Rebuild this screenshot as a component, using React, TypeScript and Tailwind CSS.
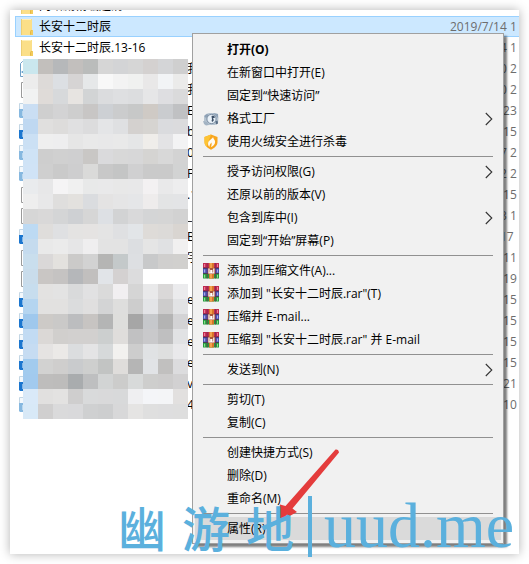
import type { ReactNode } from "react";

type FileKind = "folder" | "picture" | "document" | "video" | "videoLight";

type FileRow = {
  kind: FileKind;
  name?: string;
  tail?: string;
  date: string;
  selected?: boolean;
};

const files: FileRow[] = [
  { kind: "folder", name: "网络剧精编超清", date: "2019/7/14 1" },
  { kind: "folder", name: "长安十二时辰", date: "2019/7/14 1", selected: true },
  { kind: "folder", name: "长安十二时辰.13-16", date: "2019/7/14 1" },
  { kind: "picture", tail: "我", date: "2019/7/10 2" },
  { kind: "document", tail: "我", date: "2019/7/10 2" },
  { kind: "videoLight", tail: "E.", date: "2019/7/9 23" },
  { kind: "video", tail: "b", date: "2019/7/9 15" },
  { kind: "videoLight", tail: "0", date: "2019/6/27 2" },
  { kind: "videoLight", tail: "F", date: "2019/6/22 2" },
  { kind: "document", tail: ".1", date: "2019/6/9 15" },
  { kind: "document", tail: "_", date: "2019/6/13 1" },
  { kind: "video", tail: "B", date: "2018/10/17" },
  { kind: "document", tail: "字", date: "2019/5/8 11" },
  { kind: "document", date: "2019/5/6 19" },
  { kind: "video", tail: "e", date: "2019/5/4 15" },
  { kind: "video", tail: "e", date: "2019/5/4 15" },
  { kind: "video", tail: "e", date: "2019/5/4 15" },
  { kind: "video", tail: "e", date: "2019/5/4 15" },
  { kind: "video", tail: "vi", date: "2019/5/3 21" },
  { kind: "videoLight", tail: "4_", date: "2019/5/2 10" },
];

const mosaic: string[] = [
  "cae7ee c2bfbc b6b8ba c2bfbd babcbb d6d6d6 d3d4d6 d6d6d6 d4d1d0 d4d5d7 cfcfcf",
  "ececec dddad8 dcdfe3 d6d4d4 e6e8e9 f8f8f8 f3f3f3 f0f1f0 e9e8e8 f2f4f6 ebebea",
  "f1f2f2 dfdbd8 d7d9db e7e4e1 d2d4d5 dbdcde dedfe1 dcdddf e6e6e7 dedee1 dadadb",
  "cadef3 cfcfcf d3d3d4 cecece c8c6c5 cdd0d4 cbcccd c7c8c8 cfcac5 cacccf c0c1c3",
  "bfd8f1 e0dfde dddcdb e0e0e1 dcdcdd e4e5e7 dfe0e2 d4d1cf d6d4d1 dadbde dbdbdd",
  "cbe0f4 efefef eeeeef e6e6e6 e9e9e9 e8e8e9 e9e9e9 e5e6e7 efedea e3e3e5 f3f3f4",
  "cfe3f6 cecece d0d0d0 cfcfd0 c9c7c5 dadadc d8d8d8 d7d7d8 d5d4d2 d8d8d8 d3d3d3",
  "d0e3f6 cfcfcf cacaca cececf dadad9 c8c8c8 c4c5c5 d0d0d1 cacaca cacaca d2d3d3",
  "e9ebed e7e7e8 f5f4f5 f0f0f0 e8e9e9 e9e9ea e8e8e8 e8e8e9 f3f1f2 e9e9ea ededee",
  "eeeeee e8e8e9 dfdedd e3e1de dadcdf e4e3e3 e5e5e6 e5e6e8 eeecec e3e4e5 e3e4e6",
  "d6d6d6 d9d8d8 d4d5d6 ced0d3 d6d6d6 dde0e4 d2d3d4 d9d9da d4d5d6 d5d5d5 d2d2d2",
  "bddaf3 dfdddb dfe0e2 e4e3e2 e5e3e2 e4e4e4 dfe0e2 e2e5e8 dedbd8 dcdad8 d9d5d1",
  "c5dbee e9e9e9 ebebeb e6e6e7 efeeef e3e3e3 e3e3e3 dcdee1 e5e5e5 e0e1e3 f1f0f0",
  "c9deed dad8d8 e3e1de cbcac9 d2d2d2 b5b5b4 c4c9ca dddfe2 c8c9ca d0cfce d1d0ce",
  "c9dceb c9c6c4 c5c3c2 b5b7ba c1bfbe e1e4e8 d4d1d1 dcdcdd ffffff ffffff ffffff",
  "c7ddee e3e2e1 e3e3e3 d9dadb e1e1e2 dadada f1eff1 d5d5d5 e9e9ea dad8d8 ebebed",
  "b5d5f0 e2e1e0 e2e1e0 dbdcdd e0dfdf d3d4d5 dededd cdcdcd e3e4e7 cdcccc e2e3e5",
  "9fc8ed cdcac7 cac9c8 bcbdbf c7c4c2 b4b5b5 dededc a6a6a6 c6c8cb b4b4b4 d3d3d5",
  "c2dbf3 dbd8d6 d1cfcd d2d0cf d2d0cf cccfcf dfdddb c1c1c2 c9c9cb bfbfc0 e1e2e4",
  "c6dcf2 e5e3e2 ebe9e7 dbdddf e4e4e5 d6d9da f2f1ef cdcdcd e0e2e4 dedfdf e9e9eb",
  "a2cbee d2d2d1 cfcecd c9cbcd cecfce c2c4c3 dfdddb b5b5b5 e1e3e6 c1c0bf dcdcde",
  "a2caee bebdbc bdbcbb a9acae bebfc0 d2d4d4 cccccb d8dada cececd cdcccc d2d1d2",
  "d9e9f8 e1e0df e3e2e1 cfcece d9dadb d9d9da d8d9da efeff1 f4f5f8 f4f5f7 e2e0df",
  "d8e9f7 d0cfcf dadadb d9d9db cfd0d1 cdcecf d8d8d9 e5e4e3 dfdfdf dededf dedede",
];

function FileIcon({ kind }: { kind: FileKind }) {
  return (
    <svg className="h-4 w-4 shrink-0" viewBox="0 0 16 16" aria-hidden="true">
      {kind === "folder" && (
        <>
          <path d="M2 0h11v11l1 1v4H2z" fill="#fbdf88" />
          <path d="M2 0h1v16H2z" fill="#ecce74" />
          <path d="M3 0h9v1H3z" fill="#fff0b8" />
          <path d="M12 11h2v5h-3v-2z" fill="#f3cb5b" />
          <path d="M11.500 15.500v-3l1-1.500" fill="none" stroke="#e0b23f" strokeWidth=".8" />
        </>
      )}
      {kind === "picture" && (
        <>
          <path d="M3.500.5H14v15H1.500v-13z" fill="#fff" stroke="#6f9fc6" />
          <path d="M2 11l2-1v2z" fill="#3f87c0" />
        </>
      )}
      {kind === "document" && <path d="M2.500.5h12v15h-12z" fill="#fff" stroke="#9a9a9a" />}
      {(kind === "video" || kind === "videoLight") && (
        <>
          <path d="M.5.500h14v6H.5z" fill="#f3f8fc" stroke="#c3d6e4" />
          <path d="M0 6h15v9H1l-1-1z" fill={kind === "video" ? "#1b76cf" : "#86b8e0"} />
          <path d="M3.500 8h9v5h-9z" fill="#eef6fd" />
        </>
      )}
    </svg>
  );
}

function RarIcon() {
  return (
    <svg className="h-4 w-4" viewBox="0 0 16 16" aria-hidden="true">
      <path d="M0 0h16v5H0z" fill="#c02a50" />
      <path d="M0 5h16v5.500H0z" fill="#4a55b4" />
      <path d="M0 10.500h16v5H0z" fill="#239a3d" />
      <path d="M0 4.800h16v.7H0zM0 10.200h16v.7H0z" fill="#3a2440" />
      <path d="M1 1h1.200v3H1zM14 1h1v3h-1z" fill="#f07a94" />
      <path d="M1 6.500h1.200v3H1zM14 6.500h1v3h-1z" fill="#a9a6e6" />
      <path d="M1 11.800h1.200v3H1zM14 11.800h1v3h-1z" fill="#8ce08a" />
      <path d="M3.800 0h.7v15.500h-.7zM12 0h.7v15.500H12z" fill="#7c2b52" />
      <path d="M6 0h5v15.500H6z" fill="#d8742a" />
      <path d="M7 0h2v15.500H7z" fill="#f1a04c" />
      <path d="M5 5h7v6H5z" fill="#a8553a" />
      <path d="M6 5.500v4.500h1.800V7.500h1V10h2V5.500" fill="none" stroke="#fff" strokeWidth="1.200" />
    </svg>
  );
}

function FactoryIcon() {
  return (
    <svg className="h-4 w-4" viewBox="0 0 16 16" aria-hidden="true">
      <path d="M1 5.500 3 3l3-1h4l5 1 .5 4-.5 5-3 2H4l-3-3z" fill="#b5c3d0" />
      <path d="M1 5l3-2 2 1-3 3zM10 2l5 1v4l-2-2z" fill="#8ea1b5" />
      <path d="M0 10l4 1 2 3-3 .5L1 13z" fill="#a3b3c3" />
      <circle cx="8.500" cy="8" r="4.600" fill="#e9f1f8" stroke="#7c8ea2" />
      <path d="M8.500 5c1.500-.5 3.500.2 3.500 1.500L9.800 7.500l1.200 1.500L9.500 11l-1-1 .5-1.500z" fill="#3c4f66" />
      <path d="M12.500 10.500l2-1 .5 3-2 1z" fill="#566b83" />
    </svg>
  );
}

function ShieldIcon() {
  return (
    <svg className="h-4 w-4" viewBox="0 0 16 16" aria-hidden="true">
      <path d="M8 .5 14.500 3v5c0 3.500-3 6-6.500 7.700C4.500 14 1.500 11.500 1.500 8V3z" fill="#f8a51c" />
      <path d="M8 .5 1.500 3v5c0 2 .8 3.500 2.200 4.800z" fill="#fdc435" />
      <path d="M10 2.500c.3 2-4 3.500-4.800 6-.5 2 .3 3.500 1.300 4.500-.2-2 .9-3 1.900-4.500.5 1 .3 3-.6 4.800 2.500-1 4.600-3.100 4.300-5.700-.1-2-2.100-2.600-2.100-5.100z" fill="#fffaf0" />
    </svg>
  );
}

type MenuItem = {
  label: string;
  icon?: ReactNode;
  bold?: boolean;
  submenu?: boolean;
  active?: boolean;
};

const menu: MenuItem[][] = [
  [
    { label: "打开(O)", bold: true },
    { label: "在新窗口中打开(E)" },
    { label: "固定到“快速访问”" },
    { label: "格式工厂", icon: <FactoryIcon />, submenu: true },
    { label: "使用火绒安全进行杀毒", icon: <ShieldIcon /> },
  ],
  [
    { label: "授予访问权限(G)", submenu: true },
    { label: "还原以前的版本(V)" },
    { label: "包含到库中(I)", submenu: true },
    { label: "固定到“开始”屏幕(P)" },
  ],
  [
    { label: "添加到压缩文件(A)...", icon: <RarIcon /> },
    { label: '添加到 "长安十二时辰.rar"(T)', icon: <RarIcon /> },
    { label: "压缩并 E-mail...", icon: <RarIcon /> },
    { label: '压缩到 "长安十二时辰.rar" 并 E-mail', icon: <RarIcon /> },
  ],
  [{ label: "发送到(N)", submenu: true }],
  [{ label: "剪切(T)" }, { label: "复制(C)" }],
  [{ label: "创建快捷方式(S)" }, { label: "删除(D)" }, { label: "重命名(M)" }],
  [{ label: "属性(R)", active: true }],
];

function ContextMenu() {
  return (
    <div
      role="menu"
      className="absolute top-[23px] right-[15px] left-[182px] border border-[#a0a0a0] bg-[#f1f1f1] px-0.5 pt-1 pb-[3px] shadow-[3px_3px_2px_rgba(0,0,0,0.5)]"
    >
      {menu.map((group, index) => (
        <div key={index}>
          {index > 0 && (
            <div role="separator" className="mr-2 ml-2 flex h-[7px] items-center">
              <div className="h-px w-full bg-[#919191]" />
            </div>
          )}
          {group.map((item) => (
            <button
              key={item.label}
              type="button"
              role="menuitem"
              className={`flex h-[23px] w-full items-center gap-2 px-2 text-left whitespace-nowrap ${
                item.active ? "bg-[#dadada]" : ""
              } ${item.bold ? "font-bold" : ""}`}
            >
              <span className="h-4 w-4 shrink-0">{item.icon}</span>
              <span className="grow">{item.label}</span>
              {item.submenu && (
                <svg className="h-3.5 w-2" viewBox="0 0 8 14" aria-hidden="true">
                  <path d="M.8 1l6 6-6 6" fill="none" stroke="#333" strokeWidth="1.100" />
                </svg>
              )}
            </button>
          ))}
        </div>
      ))}
    </div>
  );
}

function FileTable() {
  return (
    <table className="-mt-[15px] ml-[5px] w-[calc(100%-5px)] table-fixed border-collapse">
      <tbody>
        {files.map((file, index) => (
          <tr
            key={index}
            className={
              file.selected
                ? "bg-[#cce8ff] shadow-[inset_1px_1px_0_#99d1ff,inset_0_-1px_0_#99d1ff]"
                : ""
            }
          >
            <td className="h-[21px] p-0">
              <div className="flex items-center gap-1 pl-1 whitespace-nowrap">
                <FileIcon kind={file.kind} />
                {file.name && <span>{file.name}</span>}
                {file.tail && <span className="ml-[148px]">{file.tail}</span>}
              </div>
            </td>
            <td className="h-[21px] w-[69px] p-0 whitespace-nowrap text-[#6d6d6d]">{file.date}</td>
          </tr>
        ))}
      </tbody>
    </table>
  );
}

function Mosaic() {
  return (
    <div className="absolute top-[49px] left-[13px] grid grid-cols-[repeat(11,15px)]" aria-hidden="true">
      {mosaic.flatMap((row, y) =>
        row
          .split(" ")
          .map((color, x) => (
            <div key={`${x}-${y}`} className="h-[15px]" style={{ backgroundColor: `#${color}` }} />
          )),
      )}
    </div>
  );
}

function Arrow() {
  return (
    <svg className="absolute top-[438px] left-[262px] h-[76px] w-[70px]" viewBox="0 0 70 76" aria-hidden="true">
      <path d="M63.500 1.500Q66.500 1 67 4.500L20.500 60.500 25 64 5 75 8 56.500 13.500 58z" fill="#e43c3c" />
    </svg>
  );
}

function Watermark() {
  return (
    <div className="absolute top-[494px] left-[118px] flex items-center whitespace-nowrap text-[#5bb0dd]">
      <span className="flex gap-4 font-['Noto_Sans_CJK_SC',sans-serif] text-[48px] leading-[64px] font-medium">
        <span>幽</span>
        <span>游</span>
        <span>地</span>
      </span>
      <span className="ml-3.5 h-[61px] w-1 bg-[#5bb0dd]" />
      <span className="ml-3 font-['Liberation_Serif',serif] text-[64px] leading-[64px]">uud.me</span>
    </div>
  );
}

export default function App() {
  return (
    <main className="relative flex min-h-screen overflow-hidden bg-white p-2.5 font-['Open_Sans','Noto_Sans_CJK_SC',sans-serif] text-xs text-black">
      <section className="relative min-w-0 grow overflow-hidden bg-white shadow-[0_0_10px_rgba(0,0,0,0.3)]">
        <FileTable />
        <Mosaic />
        <ContextMenu />
        <Arrow />
      </section>
      <Watermark />
    </main>
  );
}
